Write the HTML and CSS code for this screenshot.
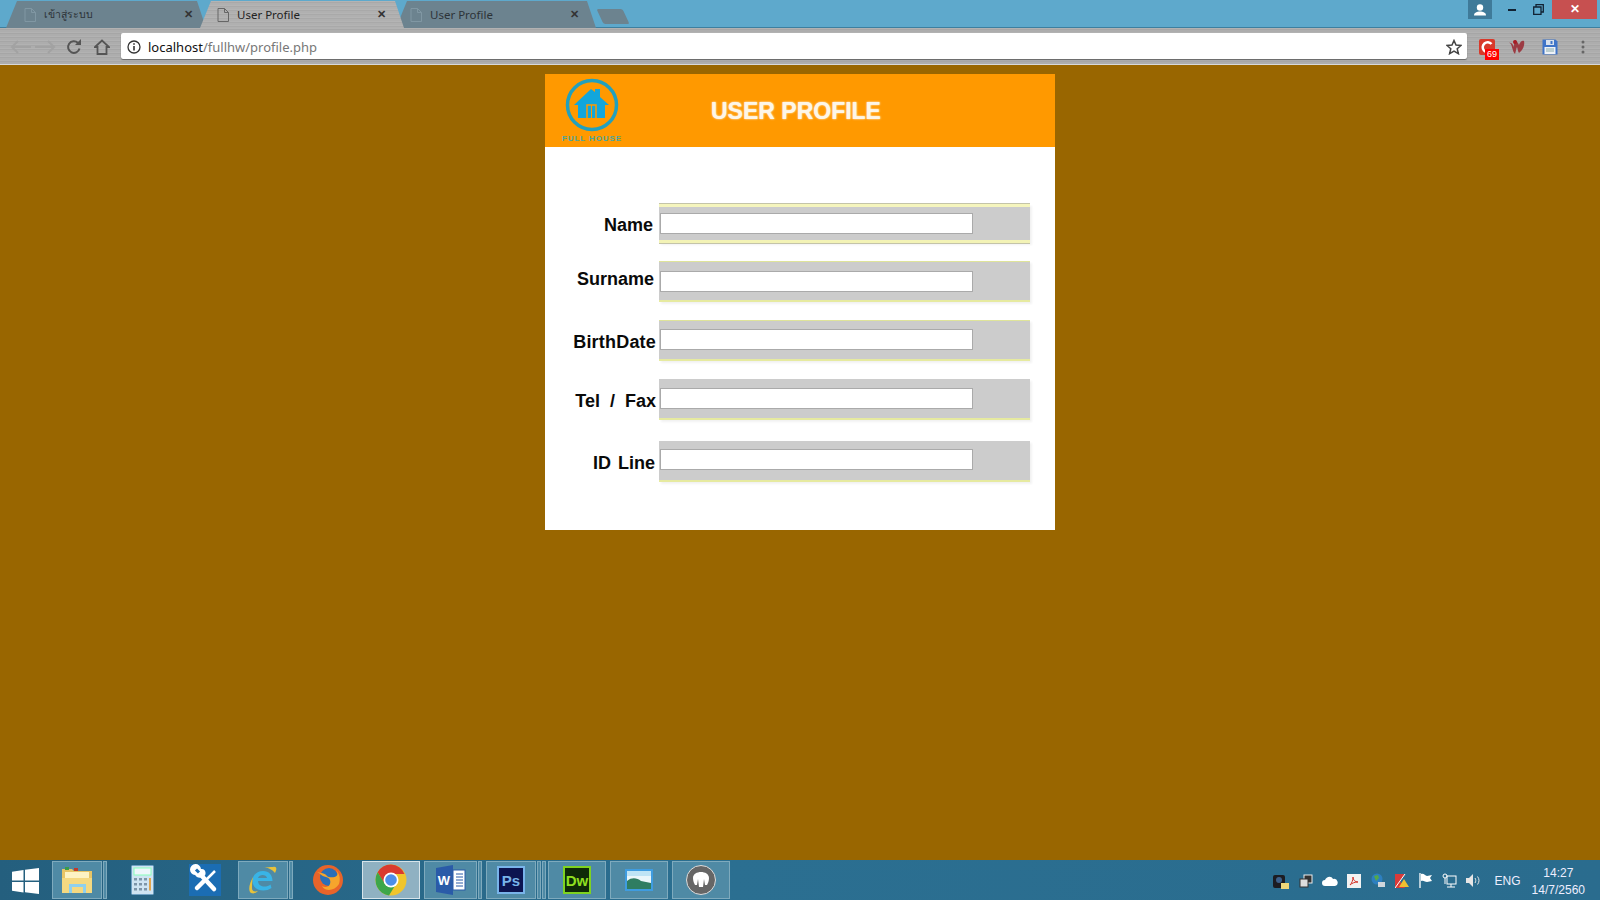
FILE: index.html
```html
<!DOCTYPE html>
<html lang="en">
<head>
    <meta charset="UTF-8">
    <title>User Profile</title>
    <link rel="stylesheet" href="styles.css">
</head>
<body>
    <div class="tabstrip">
        <div class="tab tab-first">
            <svg class="tab-icon" viewBox="0 0 12 14"><path d="M1 .5h6.5l4 4v9H1z M7.500 .5v4h4" fill="none" stroke="#8097a3"/></svg>
            <span class="tab-title tab-title-thai">เข้าสู่ระบบ</span>
            <span class="tab-close">✕</span>
        </div>
        <div class="tab tab-active">
            <svg class="tab-icon" viewBox="0 0 12 14"><path d="M1 .5h6.5l4 4v9H1z M7.500 .5v4h4" fill="none" stroke="#666"/></svg>
            <span class="tab-title">User Profile</span>
            <span class="tab-close">✕</span>
        </div>
        <div class="tab tab-last">
            <svg class="tab-icon" viewBox="0 0 12 14"><path d="M1 .5h6.5l4 4v9H1z M7.500 .5v4h4" fill="none" stroke="#8097a3"/></svg>
            <span class="tab-title">User Profile</span>
            <span class="tab-close">✕</span>
        </div>
        <div class="new-tab"></div>
        <div class="window-buttons">
            <div class="win-profile">
                <svg width="14" height="12" viewBox="0 0 14 12"><circle cx="7" cy="3.500" r="3.200" fill="#fff"/><path d="M1 11.500c0-3 3-4 6-4s6 1 6 4z" fill="#fff"/></svg>
            </div>
            <div class="win-min"><span class="min-bar"></span></div>
            <div class="win-restore">
                <svg width="11" height="11" viewBox="0 0 11 11"><path d="M.7 3h7.300v7.300H.7z M3 3V.7h7.300V8H8" fill="none" stroke="#123" stroke-width="1.300"/></svg>
            </div>
            <div class="win-close">✕</div>
        </div>
    </div>

    <div class="toolbar">
        <div class="nav-buttons">
            <svg width="24" height="16" viewBox="0 0 24 16"><path d="M22 8H3 M9 2 3 8l6 6" fill="none" stroke="#a2a2a2" stroke-width="2"/></svg>
            <svg width="24" height="16" viewBox="0 0 24 16"><path d="M2 8h19 M15 2l6 6-6 6" fill="none" stroke="#a2a2a2" stroke-width="2"/></svg>
            <svg class="nav-reload" width="16" height="16" viewBox="0 0 16 16"><path d="M13.500 9.500A5.800 5.800 0 1 1 12 4" fill="none" stroke="#555" stroke-width="2"/><path d="M9 6h6V0z" fill="#555"/></svg>
            <svg class="nav-home" width="16" height="16" viewBox="0 0 16 16"><path d="M1 8 8 1.500 15 8h-2.500v7h-9V8z" fill="none" stroke="#555" stroke-width="1.800"/></svg>
        </div>
        <div class="urlbar">
            <svg width="14" height="14" viewBox="0 0 14 14"><circle cx="7" cy="7" r="6" fill="none" stroke="#333" stroke-width="1.300"/><path d="M7 6v4.500 M7 3.300v1.500" stroke="#333" stroke-width="1.600"/></svg>
            <span class="url"><span class="url-host">localhost</span>/fullhw/profile.php</span>
            <svg class="url-star" width="16" height="16" viewBox="0 0 16 16"><path d="M8 1.500l2 4.600 5 .4-3.800 3.300 1.200 4.900L8 12.100l-4.400 2.600 1.200-4.900L1 6.500l5-.4z" fill="none" stroke="#444" stroke-width="1.500"/></svg>
        </div>
        <div class="extensions">
            <div class="ext ext-red">
                <svg width="16" height="16" viewBox="0 0 16 16"><rect width="16" height="16" rx="2" fill="#d8392b"/><path d="M12.500 5A5 5 0 1 0 12 12" fill="none" stroke="#fff" stroke-width="2.500"/></svg>
                <span class="ext-badge">69</span>
            </div>
            <svg class="ext ext-w" width="18" height="16" viewBox="0 0 18 16"><path d="M1 4c3-1 3 8 6 11 1-3 1-5 2-7 1 3 1 5 2 6 4-3 6-8 5-12-2-1-4 1-5 4C10 4 9 2 7 1 6 3 6 6 6 8 5 6 4 3 1 4z" fill="#9c3b43"/><circle cx="7" cy="3" r="2" fill="#a81c24"/></svg>
            <svg class="ext" width="16" height="16" viewBox="0 0 16 16"><path d="M.5.5h13l2 2v13H.500z" fill="#3f74c8"/><rect x="4" y="1" width="8" height="5" fill="#d9e2ee"/><rect x="8.500" y="2" width="2" height="3" fill="#3f74c8"/><rect x="2.500" y="8" width="11" height="7" fill="#eef2f7"/><path d="M4 10h8M4 12h8" stroke="#8aa" /></svg>
            <svg class="ext-menu" width="4" height="14" viewBox="0 0 4 14"><circle cx="2" cy="2" r="1.500" fill="#666"/><circle cx="2" cy="7" r="1.500" fill="#666"/><circle cx="2" cy="12" r="1.500" fill="#666"/></svg>
        </div>
    </div>

    <div class="page">
        <div class="card">
            <div class="card-header">
                <div class="logo">
                    <svg width="56" height="56" viewBox="0 0 56 56">
                        <circle cx="28" cy="28" r="24.500" fill="none" stroke="#22a0bd" stroke-width="3.500"/>
                        <path d="M10 28 27 12l4 3v-3h5v8l9 8h-4v13H14V28z" fill="#12a6dc"/>
                        <path d="M23 41V28h9v13" fill="none" stroke="#ff9900" stroke-width="1.500"/>
                        <path d="M27.500 28v13" stroke="#ff9900"/>
                    </svg>
                    <span class="logo-text">FULL HOUSE</span>
                </div>
                <h1 class="card-title">USER PROFILE</h1>
            </div>
            <form class="profile-form">
                <div class="row row-name">
                    <label class="row-label">Name</label>
                    <div class="field field-thick"><input class="field-input" type="text"></div>
                </div>
                <div class="row row-surname">
                    <label class="row-label">Surname</label>
                    <div class="field field-lined"><input class="field-input" type="text"></div>
                </div>
                <div class="row row-birth">
                    <label class="row-label">BirthDate</label>
                    <div class="field field-lined"><input class="field-input" type="text"></div>
                </div>
                <div class="row row-tel">
                    <label class="row-label">Tel / Fax</label>
                    <div class="field"><input class="field-input" type="text"></div>
                </div>
                <div class="row row-line">
                    <label class="row-label">ID Line</label>
                    <div class="field"><input class="field-input" type="text"></div>
                </div>
            </form>
        </div>
    </div>

    <div class="taskbar">
        <div class="start">
            <svg width="27" height="26" viewBox="0 0 27 26"><path d="M0 3.800 11.500 2v10.500H0z M13 1.800 27 0v12.500H13z M0 14h11.500v10.500L0 22.800z M13 14h14v12l-14-1.800z" fill="#fff"/></svg>
        </div>
        <div class="task task-open task-explorer">
            <svg width="32" height="30" viewBox="0 0 32 30"><path d="M1 4h10l2 2h18v22H1z" fill="#e8c566"/><path d="M4 7h24v8H4z" fill="#fdf3c4"/><rect x="4" y="2" width="4" height="3" fill="#3a9c4a"/><rect x="13" y="3" width="4" height="3" fill="#c0392b"/><path d="M1 13h30v15H1z" fill="#f5d981"/><path d="M8 28V19h17v9h-3v-6H11v6z" fill="#8fd0ee"/></svg>
        </div>
        <span class="task-edge"></span>
        <div class="task task-calc">
            <svg width="23" height="30" viewBox="0 0 23 30"><rect x=".5" y=".5" width="22" height="29" rx="1" fill="#cfe4f2" stroke="#6fa1c4"/><rect x="3" y="3" width="17" height="7" fill="#eef6fb" stroke="#8fb"/><path d="M3 13h3v2.500H3zM8 13h3v2.500H8zM13 13h3v2.500h-3zM3 18h3v2.500H3zM8 18h3v2.500H8zM13 18h3v2.500h-3zM3 23h3v2.500H3zM8 23h3v2.500H8zM13 23h3v2.500h-3z" fill="#7d95a8"/><path d="M18 13h2v12.500h-2z" fill="#e0a44c"/></svg>
        </div>
        <div class="task task-tools">
            <svg width="32" height="32" viewBox="0 0 32 32"><rect width="32" height="32" fill="#1b6db3"/><path d="M11 10 25 25" stroke="#fff" stroke-width="4.500" stroke-linecap="round"/><path d="M12 4a5.500 5.500 0 1 0-6 6 5.500 5.500 0 0 0 7 2 4 4 0 0 0-1-8z" fill="#fff" transform="translate(0 1)"/><path d="M7 5.500l3 3" stroke="#1b6db3" stroke-width="3"/><path d="M26 7 16 17" stroke="#fff" stroke-width="2.500"/><path d="M14 18 8 24" stroke="#fff" stroke-width="4.500" stroke-linecap="round"/></svg>
        </div>
        <div class="task task-open task-ie">
            <svg width="32" height="32" viewBox="0 0 32 32"><path d="M16 7c6 0 9.500 4 9.500 10H11c.3 6 8 7 12.500 3.500l1 3.500c-7 5-19 2.500-19-7C5.500 11 10 7 16 7z M11 14h9c-.5-4-8-4-9 0z" fill="#39b4e6" fill-rule="evenodd"/><path d="M26 3c4-1 4 2 2 6-3-4-8-6-12-5 4-1 7-1 10-1zM6 13C2 20 1 27 4 29c3 1 5 0 7-2-4 1-6 0-6-3 0-3 0-6 1-11z" fill="#e8c23a"/></svg>
        </div>
        <span class="task-edge"></span>
        <div class="task task-ff">
            <svg width="32" height="32" viewBox="0 0 32 32"><circle cx="16" cy="16" r="15" fill="#e8642a"/><circle cx="17" cy="13" r="9" fill="#2a6fb8"/><path d="M5 8c3 1 4 4 9 5 4 1 5 4 4 7-1 3-5 4-8 2 3 6 13 5 17-2 2-6 0-11-3-14 6 9-8 8-9 6-2-3-6-3-10-4z" fill="#f6a52c"/></svg>
        </div>
        <div class="task task-active task-chrome">
            <svg width="32" height="32" viewBox="0 0 32 32"><circle cx="16" cy="16" r="15.500" fill="#f0c52c"/><path d="M16 .5A15.500 15.500 0 0 0 2.600 8.300L9 19l7-9h13.500A15.500 15.500 0 0 0 16 .5z" fill="#d93a2f"/><path d="M2.600 8.300A15.500 15.500 0 0 0 14 31.400L21 20H10z" fill="#3da64a"/><circle cx="16" cy="16" r="7.500" fill="#fff"/><circle cx="16" cy="16" r="5.800" fill="#4d8ee8"/></svg>
        </div>
        <div class="task task-open task-word">
            <svg width="30" height="30" viewBox="0 0 30 30"><path d="M0 3 17 0v30L0 27z" fill="#2a5ba8"/><rect x="17" y="5" width="12" height="20" fill="#fff" stroke="#2a5ba8"/><path d="M20 9h7M20 12h7M20 15h7M20 18h7M20 21h7" stroke="#2a5ba8"/><text class="app-letter" x="8" y="20" fill="#fff" font-size="13" text-anchor="middle">W</text></svg>
        </div>
        <span class="task-edge"></span>
        <div class="task task-open task-ps">
            <svg width="28" height="28" viewBox="0 0 28 28"><rect x="1" y="1" width="26" height="26" fill="#0c1450" stroke="#78b4ea" stroke-width="2"/><text class="app-letter" x="14" y="20" fill="#78b4ea" font-size="15" text-anchor="middle">Ps</text></svg>
        </div>
        <span class="task-edge"></span>
        <span class="task-edge"></span>
        <div class="task task-open task-dw">
            <svg width="28" height="28" viewBox="0 0 28 28"><rect x="1" y="1" width="26" height="26" fill="#0f2a08" stroke="#7ed321" stroke-width="2"/><text class="app-letter" x="14" y="20" fill="#8fe020" font-size="15" text-anchor="middle">Dw</text></svg>
        </div>
        <div class="task task-open task-photos">
            <svg width="30" height="24" viewBox="0 0 30 24"><rect x="1" y="1" width="28" height="22" fill="#3f9ce0"/><rect x="3" y="3" width="24" height="18" fill="#eaf6fa"/><path d="M3 13c5-4 10-3 14 0l10 2v6H3z" fill="#2f7d62"/><path d="M3 3h24v5H3z" fill="#bfe4f5"/></svg>
        </div>
        <div class="task task-open task-mamp">
            <svg width="30" height="30" viewBox="0 0 30 30"><circle cx="15" cy="15" r="14.500" fill="#666" stroke="#ddd"/><path d="M7 13c0-4 4-6 8-6s8 2 8 6c0 3-1 5-2 7h-2l-1-6-1 8h-4l-1-8-1 6H9c-1-2-2-4-2-7z" fill="#fff"/></svg>
        </div>
        <div class="tray">
            <svg class="tray-icon" width="18" height="16" viewBox="0 0 18 16"><rect x="1" y="2" width="12" height="13" rx="2" fill="#1c1c22"/><circle cx="7" cy="7" r="3" fill="#3c5f8a"/><rect x="9" y="10" width="8" height="6" fill="#efd77a"/></svg>
            <svg class="tray-icon" width="14" height="14" viewBox="0 0 14 14"><rect x="5" y="1" width="8" height="8" fill="#333" stroke="#eee"/><rect x="1" y="5" width="8" height="8" fill="#ddd" stroke="#333"/></svg>
            <svg class="tray-icon" width="16" height="10" viewBox="0 0 16 10"><path d="M3 10a3 3 0 0 1 0-6c1-3 6-5 8-1a3.500 3.500 0 0 1 2 7z" fill="#fff"/></svg>
            <svg class="tray-icon" width="14" height="14" viewBox="0 0 14 14"><rect width="14" height="14" fill="#f2f2f2"/><path d="M3 11c2-2 3-5 3-8 0 3 2 5 5 5-3 0-6 1-8 3z" fill="none" stroke="#d6342a"/></svg>
            <svg class="tray-icon" width="16" height="16" viewBox="0 0 16 16"><circle cx="7" cy="6" r="5.500" fill="#2d7fc0"/><path d="M4 3l4-1 1 3-3 3z" fill="#54a84a"/><rect x="8" y="9" width="7" height="5" fill="#cfd6dc"/></svg>
            <svg class="tray-icon" width="15" height="15" viewBox="0 0 15 15"><path d="M0 1h10L5 8l5 7H0z" fill="#d93a3a"/><path d="M9 6l5 8H4z" fill="#f0c030"/><path d="M0 15 10 1" stroke="#fff"/></svg>
            <svg class="tray-icon" width="14" height="15" viewBox="0 0 14 15"><path d="M1 0v15" stroke="#fff" stroke-width="1.300"/><path d="M2 1c3-1 4 2 6 2l5-1-2 3 2 3-5 1c-2 0-3-2-6-1z" fill="#fff"/></svg>
            <svg class="tray-icon" width="15" height="15" viewBox="0 0 15 15"><rect x="5" y="3" width="9" height="8" fill="none" stroke="#fff"/><circle cx="3" cy="3" r="2" fill="none" stroke="#fff"/><path d="M3 5v6 M9 11v3 M5 14h8" stroke="#fff"/></svg>
            <svg class="tray-icon" width="15" height="13" viewBox="0 0 15 13"><path d="M0 4h3l4-4v13L3 9H0z" fill="#e6e6e6"/><path d="M9 4c1 1.500 1 3.500 0 5M11.500 2.500c2 2.500 2 5.500 0 8" fill="none" stroke="#e6e6e6"/></svg>
            <span class="tray-lang">ENG</span>
            <div class="clock">
                <span>14:27</span>
                <span>14/7/2560</span>
            </div>
        </div>
    </div>
</body>
</html>
```

FILE: styles.css
```css
body {
    margin: 0;
    height: 900px;
    display: flex;
    flex-direction: column;
    overflow: hidden;
    font-family: "Liberation Sans", Arial, sans-serif;
    background-color: #996600;
}

/* Tab strip */
.tabstrip {
    height: 28px;
    box-sizing: border-box;
    padding: 1px 3px 0 6px;
    display: flex;
    background-color: #5ea9cc;
    border-bottom: 1px solid #3d7f9f;
}
.tab {
    width: 200px;
    height: 27px;
    margin-right: -8px;
    padding: 0 0 0 19px;
    box-sizing: border-box;
    display: flex;
    align-items: center;
    background-color: #6c838f;
    color: #2c3338;
    font-size: 12px;
    clip-path: polygon(11px 0, calc(100% - 9px) 0, 100% 100%, 0 100%);
}
.tab-first {
    padding-left: 18px;
}
.tab-first .tab-close {
    margin-right: 8px;
}
.tab-active {
    width: 204px;
    margin-left: 2px;
    padding-left: 17px;
    position: relative;
    z-index: 1;
    color: #222;
    background: repeating-linear-gradient(180deg, #b4b4b4 0 1px, #a9a9a9 1px 2px, #b0b0b0 2px 4px);
}
.tab-active .tab-close {
    margin-right: 13px;
}
.tab-last {
    padding-left: 14px;
}
.tab-last .tab-close {
    margin-right: 12px;
}
.tab-icon {
    width: 12px;
    height: 14px;
    margin-right: 8px;
}
.tab-title {
    flex: 1;
    font-family: "Noto Sans", "Liberation Sans", sans-serif;
    font-size: 11.500px;
}
.tab-title-thai {
    font-size: 10.500px;
}
.tab-close {
    width: 14px;
    margin-right: 10px;
    font-size: 11px;
    font-weight: bold;
    color: #333;
}
.new-tab {
    width: 26px;
    height: 15px;
    margin: 8px 0 0 12px;
    background-color: #6c838f;
    border-radius: 2px;
    transform: skewX(25deg);
}
.window-buttons {
    margin: -1px 0 0 auto;
    display: flex;
    height: 19px;
}
.win-profile {
    width: 24px;
    margin-right: 6px;
    display: flex;
    align-items: center;
    justify-content: center;
    background-color: #3f7a99;
}
.win-min, .win-restore {
    width: 28px;
    display: flex;
    align-items: center;
    justify-content: center;
}
.win-restore {
    width: 24px;
}
.min-bar {
    width: 8px;
    height: 2px;
    background-color: #123;
}
.win-close {
    width: 45px;
    margin-left: 2px;
    text-align: center;
    line-height: 19px;
    font-size: 12px;
    font-weight: bold;
    color: #fff;
    background-color: #c75050;
}

/* Toolbar */
.toolbar {
    height: 37px;
    box-sizing: border-box;
    padding: 5px 0 5px 0;
    display: flex;
    align-items: stretch;
    background: repeating-linear-gradient(180deg, #b2b2b2 0 1px, #a6a6a6 1px 2px, #adadad 2px 4px);
    border-bottom: 1px solid #d8d8d8;
}
.nav-buttons {
    width: 121px;
    display: flex;
    align-items: center;
    padding: 1px 0 0 9px;
    box-sizing: border-box;
}
.nav-reload {
    margin-left: 9px;
}
.nav-home {
    margin-left: 12px;
}
.urlbar {
    width: 1346px;
    box-sizing: border-box;
    padding: 1px 5px 0 6px;
    display: flex;
    align-items: center;
    gap: 7px;
    background-color: #fff;
    border-radius: 2px;
    box-shadow: 0 1px 1px #666;
}
.url {
    flex: 1;
    font-family: "Noto Sans", sans-serif;
    font-size: 13px;
    color: #777;
}
.url-host {
    color: #111;
}
.extensions {
    flex: 1;
    display: flex;
    align-items: center;
    padding: 1px 0 0 12px;
}
.ext {
    margin-right: 15px;
}
.ext-w {
    margin: 0 16px 0 -2px;
}
.ext-red {
    position: relative;
    display: flex;
}
.ext-badge {
    position: absolute;
    left: 6px;
    top: 10px;
    width: 14px;
    height: 11px;
    background-color: #f00;
    color: #fff;
    font-size: 9px;
    line-height: 11px;
    text-align: center;
}
.ext-menu {
    margin-left: 8px;
}

/* Page */
.page {
    flex: 1;
    display: flex;
    justify-content: center;
    align-items: flex-start;
    padding-top: 9px;
}
.card {
    width: 510px;
    height: 456px;
    background-color: #fff;
}
.card-header {
    height: 73px;
    display: flex;
    background-color: #ff9900;
}
.logo {
    width: 62px;
    margin-left: 16px;
    display: flex;
    flex-direction: column;
    align-items: center;
}
.logo svg {
    margin-top: 3px;
}
.logo-text {
    margin-top: 1px;
    font-size: 8px;
    font-weight: bold;
    letter-spacing: 0.9px;
    white-space: nowrap;
    color: #4ba59c;
}
.card-title {
    margin: 23px 0 0 88px;
    font-size: 23px;
    line-height: 28px;
    font-weight: bold;
    color: #fdf6e8;
    text-shadow: 0 0 2px #fff;
}

/* Form */
.profile-form {
    padding-top: 57px;
}
.row {
    display: flex;
    margin-bottom: 18px;
}
.row-label {
    width: 114px;
    box-sizing: border-box;
    text-align: right;
    font-size: 18px;
    line-height: 20px;
    font-weight: bold;
    word-spacing: 2px;
    color: #0a0a0a;
}
.row-name .row-label { padding: 11px 6px 0 0; }
.row-surname .row-label { padding: 8px 5px 0 0; }
.row-birth .row-label { padding: 12px 3px 0 0; letter-spacing: 0.2px; }
.row-tel .row-label { padding: 12px 3px 0 0; word-spacing: 5px; }
.row-line .row-label { padding: 12px 4px 0 0; }
.row-tel { margin-bottom: 21px; }
.field {
    width: 371px;
    height: 41px;
    box-sizing: border-box;
    padding: 9px 0 0 1px;
    background-color: #ccc;
    border-bottom: 2px solid #e6eaa0;
    box-shadow: 2px 2px 2px #f2f2f2;
}
.field-lined {
    border-top: 1px solid #dfe49a;
    padding-top: 8px;
}
.row-surname .field {
    padding-top: 9px;
}
.field-thick {
    height: 39px;
    border-top: 3px solid #f5f5bd;
    border-bottom: 3px solid #f3f3b6;
    padding-top: 6px;
    box-shadow: 0 -1px 0 #c4c4a8, 0 1px 0 #c4c4a8, 2px 2px 2px #f2f2f2;
}
.row-line .field {
    padding-top: 8px;
}
.field-input {
    display: block;
    width: 313px;
    height: 21px;
    box-sizing: border-box;
    margin: 0;
    padding: 0;
    border: 1px solid #aaa;
    background-color: #fff;
}

/* Taskbar */
.taskbar {
    height: 40px;
    box-sizing: border-box;
    padding-top: 1px;
    display: flex;
    color: #eef;
    background: linear-gradient(90deg, #245f7e, #2b6f91 45%, #2a6c8e);
}
.start {
    width: 52px;
    display: flex;
    align-items: center;
    justify-content: center;
    padding-right: 2px;
    box-sizing: border-box;
}
.task {
    height: 38px;
    box-sizing: border-box;
    display: flex;
    align-items: center;
    justify-content: center;
}
.task-open {
    background-color: #4f8aa5;
    border: 1px solid #7eaabd;
}
.task-active {
    background-color: #8fb1c2;
    border: 1px solid #d6e4ea;
}
.task-edge {
    width: 4px;
    height: 38px;
    margin-left: 1px;
    box-sizing: border-box;
    border: 1px solid #7eaabd;
    background-color: #4f8aa5;
}
.task-explorer { width: 50px; }
.task-calc { width: 50px; margin-left: 10px; }
.task-tools { width: 50px; margin-left: 13px; }
.task-ie { width: 50px; margin-left: 8px; }
.task-ff { width: 50px; margin-left: 10px; }
.task-chrome { width: 58px; margin-left: 9px; }
.task-word { width: 53px; margin-left: 4px; }
.task-ps { width: 50px; margin-left: 4px; }
.task-dw { width: 58px; margin-left: 2px; }
.task-photos { width: 58px; margin-left: 4px; }
.task-mamp { width: 58px; margin-left: 4px; }
.app-letter {
    font-family: "Liberation Sans", sans-serif;
    font-weight: bold;
}
.tray {
    margin-left: auto;
    display: flex;
    align-items: center;
    padding-right: 15px;
}
.tray-icon {
    margin-right: 9px;
}
.tray-lang {
    margin: 0 11px 0 5px;
    font-size: 12px;
}
.clock {
    display: flex;
    flex-direction: column;
    align-items: center;
    gap: 3px;
    padding-top: 1px;
    font-size: 12px;
}
```
